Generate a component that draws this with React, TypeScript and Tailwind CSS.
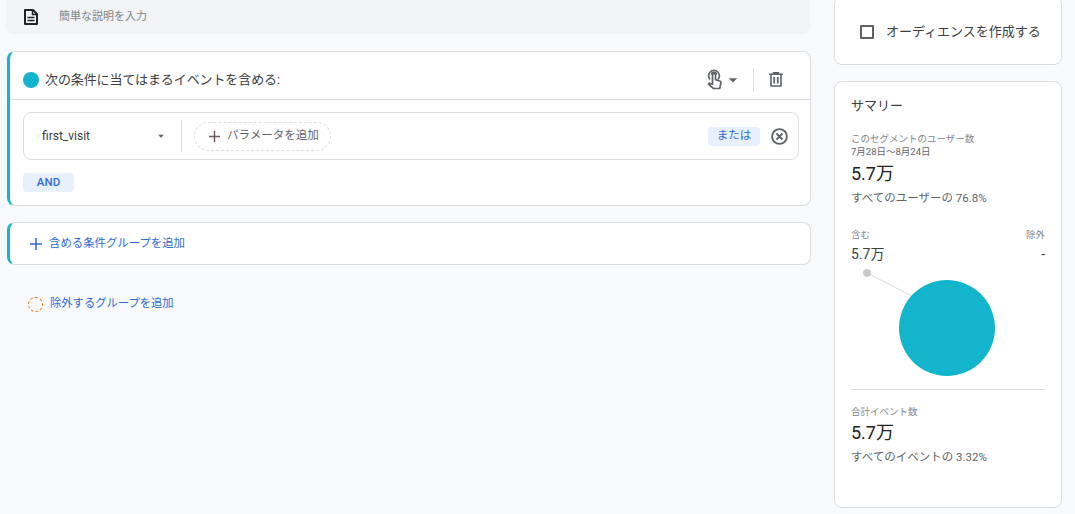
import { MdArrowDropDown } from "react-icons/md";

const font = { fontFamily: '"Roboto", "Noto Sans CJK JP", sans-serif' };

function DocIcon() {
  return (
    <svg width="14" height="16" viewBox="0 0 14 16" fill="none" stroke="#202124" strokeWidth="2">
      <path d="M1 1h8l4 4v10H1z" strokeLinejoin="round" />
      <path d="M8.5 1v4.5H13" strokeWidth="1.5" />
      <path d="M3.5 8.5h7M3.5 11.5h7" strokeWidth="1.5" />
    </svg>
  );
}

function TouchIcon() {
  return (
    <svg width="15" height="21" viewBox="0 0 15 21" fill="none" stroke="#5f6368" strokeWidth="1.7">
      <path d="M3 10.5A5.4 5.4 0 1 1 11 10.5" />
      <path d="M4.6 5.8a2.4 2.4 0 0 1 4.8 0" strokeWidth="1.6" />
      <path
        d="M5.5 6a1.5 1.5 0 0 1 3 0v4.6l4 1.4a1.5 1.5 0 0 1 1.4 1.9l-1.2 5.6h-6.2L1.4 15.2l.9-1 3.2 1z"
        fill="#ffffff"
        strokeLinejoin="round"
      />
    </svg>
  );
}

function TrashIcon() {
  return (
    <svg width="14" height="15" viewBox="0 0 14 15" fill="none" stroke="#5f6368" strokeWidth="1.6">
      <path d="M0 2.2h14M4.5 2V.8h5V2" />
      <path d="M2 2.5V14h10V2.5" />
      <path d="M5.2 5v6.5M8.8 5v6.5" strokeWidth="1.8" />
    </svg>
  );
}

function CancelIcon() {
  return (
    <svg width="17" height="17" viewBox="0 0 17 17" fill="none" stroke="#5f6368" strokeWidth="1.9">
      <circle cx="8.5" cy="8.5" r="7.4" />
      <path d="M5.5 5.5l6 6M11.5 5.5l-6 6" />
    </svg>
  );
}

function PlusIcon({ size, color }: { size: number; color: string }) {
  const mid = size / 2;
  return (
    <svg width={size} height={size} viewBox={`0 0 ${size} ${size}`} fill="none" stroke={color} strokeWidth="1.5">
      <path d={`M${mid} 0v${size}M0 ${mid}h${size}`} />
    </svg>
  );
}

function ConditionCard() {
  return (
    <div className="ml-px mt-[17px] h-[155px] rounded-lg border border-[#dadce0] border-l-[3px] border-l-[#12b5cb] bg-white">
      <div className="flex h-[48px] items-center border-b border-[#dadce0] pl-[13px] pt-[8px]">
        <span className="h-4 w-4 rounded-full bg-[#12b5cb]" />
        <span className="ml-[6px] text-[13px] tracking-[-0.1px] text-[#3c4043]">次の条件に当てはまるイベントを含める:</span>
        <div className="ml-auto flex items-center">
          <TouchIcon />
          <MdArrowDropDown size={20} className="ml-px text-[#5f6368]" />
          <span className="ml-[10px] h-[24px] w-px bg-[#dadce0]" />
          <span className="ml-[15px] mr-[27px] flex">
            <TrashIcon />
          </span>
        </div>
      </div>
      <div className="ml-[13px] mr-[11px] mt-[12px] flex h-[48px] items-center rounded-lg border border-[#dadce0] pl-[18px]">
        <span className="w-[112px] text-[12px] text-[#3c4043]">first_visit</span>
        <MdArrowDropDown size={14} className="text-[#5f6368]" />
        <span className="ml-[13px] h-[32px] w-px bg-[#dadce0]" />
        <div className="ml-[12px] flex h-[29px] w-[137px] items-center rounded-full border border-dashed border-[#dadce0] pl-[14px] text-[11.5px] text-[#5f6368]">
          <PlusIcon size={11} color="#6b5b5b" />
          <span className="ml-[7px]">パラメータを追加</span>
        </div>
        <span className="ml-auto flex h-[19px] w-[52px] items-center justify-center rounded bg-[#e8f0fe] text-[11.5px] text-[#2b6bdc]">
          または
        </span>
        <span className="ml-[11px] mr-[10px] flex">
          <CancelIcon />
        </span>
      </div>
      <div className="ml-[13px] mt-[13px] flex h-[19px] w-[51px] items-center justify-center rounded bg-[#e8f0fe] text-[11.5px] font-medium text-[#2b6bdc]">
        AND
      </div>
    </div>
  );
}

function SummaryStat({ value, note }: { value: string; note: string }) {
  return (
    <>
      <div className="mt-[4px] text-[18px] leading-[22px] text-[#202124]">{value}</div>
      <div className="mt-[5px] text-[11.5px] leading-[16px] text-[#5f6368]">{note}</div>
    </>
  );
}

function Summary() {
  return (
    <div className="mt-[16px] h-[427px] rounded-lg border border-[#dadce0] bg-white px-[16px] pt-[15px]">
      <div className="text-[13px] leading-[18px] text-[#3c4043]">サマリー</div>
      <div className="mt-[17px] text-[9.5px] leading-[13px] text-[#80868b]">このセグメントのユーザー数</div>
      <div className="text-[9.5px] leading-[14px] text-[#5f6368]">7月28日～8月24日</div>
      <SummaryStat value="5.7万" note="すべてのユーザーの 76.8%" />
      <div className="mt-[22px] flex justify-between text-[9.5px] leading-[13px] text-[#80868b]">
        <span>含む</span>
        <span>除外</span>
      </div>
      <div className="mt-[4px] flex justify-between text-[14px] leading-[18px] text-[#3c4043]">
        <span>5.7万</span>
        <span>-</span>
      </div>
      <svg width="194" height="121" viewBox="0 0 194 121" className="mt-[5px] block">
        <line x1="16" y1="5" x2="65" y2="30" stroke="#dadce0" strokeWidth="1" />
        <circle cx="16" cy="5" r="4" fill="#cbc9ca" />
        <circle cx="96" cy="60" r="48" fill="#12b5cb" />
      </svg>
      <div className="border-t border-[#dadce0] pt-[15px]">
        <div className="mb-px text-[9.5px] leading-[13px] text-[#80868b]">合計イベント数</div>
        <SummaryStat value="5.7万" note="すべてのイベントの 3.32%" />
      </div>
    </div>
  );
}

export default function App() {
  return (
    <div className="flex h-[514px] w-[1075px] overflow-hidden bg-[#f8f9fa]" style={font}>
      <div className="ml-[6px] w-[805px]">
        <div className="mr-px flex h-[34px] items-center rounded-b-lg bg-[#f1f3f4] pl-[18px]">
          <DocIcon />
          <span className="ml-[21px] text-[11px] text-[#80868b]">簡単な説明を入力</span>
        </div>
        <ConditionCard />
        <div className="ml-px mt-[16px] flex h-[43px] items-center rounded-lg border border-[#dadce0] border-l-[3px] border-l-[#12b5cb] bg-white pl-[20px] pt-px text-[11.4px] text-[#2b6bdc]">
          <PlusIcon size={12} color="#2b6bdc" />
          <span className="ml-[7px]">含める条件グループを追加</span>
        </div>
        <div className="ml-[22px] mt-[31px] flex items-center text-[11.3px] text-[#2b6bdc]">
          <span className="h-[15px] w-[15px] rounded-full border border-dashed border-[#e8710a]" />
          <span className="ml-[7px]">除外するグループを追加</span>
        </div>
      </div>
      <div className="ml-[23px] w-[228px]">
        <div className="-mt-1 flex h-[69px] items-center rounded-lg border border-[#dadce0] bg-white pl-[25px] pt-[2px]">
          <span className="h-[14px] w-[14px] rounded-[1px] border-2 border-[#5f6368]" />
          <span className="ml-[12px] text-[13px] text-[#3c4043]">オーディエンスを作成する</span>
        </div>
        <Summary />
      </div>
    </div>
  );
}
